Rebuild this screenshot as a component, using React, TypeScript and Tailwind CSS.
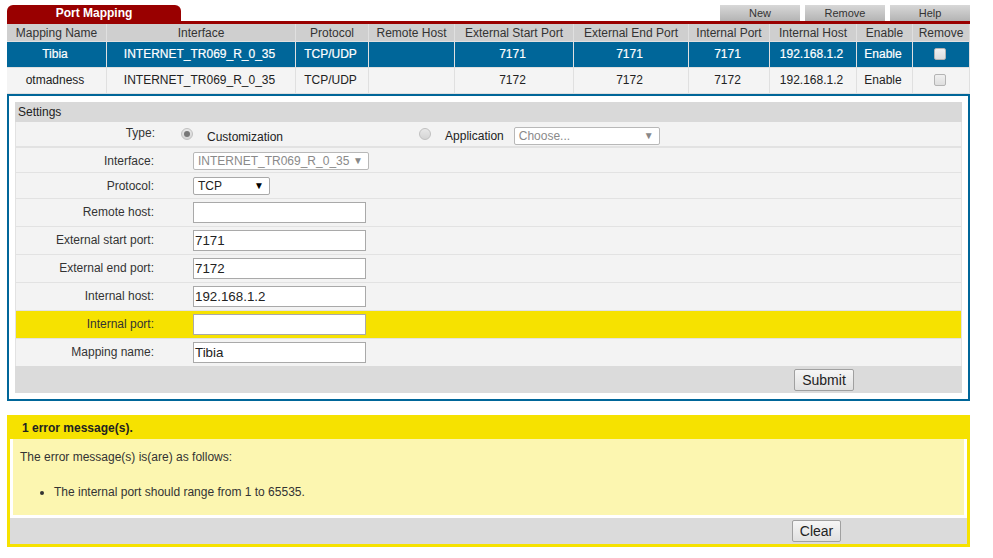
import React from 'react';

const cols = 'grid grid-cols-[99px_188px_72px_85px_118px_114px_80px_86px_55px_56px] gap-px';

const headers = ['Mapping Name', 'Interface', 'Protocol', 'Remote Host', 'External Start Port', 'External End Port', 'Internal Port', 'Internal Host', 'Enable', 'Remove'];

const rows = [
  { name: 'Tibia', start: '7171', end: '7171', port: '7171', selected: true },
  { name: 'otmadness', start: '7172', end: '7172', port: '7172', selected: false },
];

function Check() {
  return <span className="block w-[12px] h-[12px] rounded-[2px] border border-[#b4b4b4] bg-gradient-to-b from-[#f0f0f0] to-[#dedede]" />;
}

function Radio({ on }: { on?: boolean }) {
  return (
    <span className="flex items-center justify-center w-[12px] h-[12px] rounded-full border border-[#c0c0c0] bg-gradient-to-b from-[#e8e8e8] to-[#d4d4d4]">
      {on && <span className="block w-[6px] h-[6px] rounded-full bg-[#777]" />}
    </span>
  );
}

function Select({ value, width, disabled }: { value: string; width: string; disabled?: boolean }) {
  return (
    <div className={`relative flex items-center h-[18px] bg-white border rounded-[2px] pl-[4px] ${width} ${disabled ? 'border-[#b8b8b8] text-[#8a8a8a]' : 'border-[#a9a9a9] text-[#222]'}`}>
      {value}
      <span className={`absolute right-[5px] top-[3px] text-[10px] leading-[10px] ${disabled ? 'text-[#888]' : 'text-black'}`}>▼</span>
    </div>
  );
}

function Field({ label, value, yellow }: { label: string; value: string; yellow?: boolean }) {
  return (
    <div className={`flex items-center border-b border-[#e2e2e2] h-[28px] last:h-[27px] last:border-b-0 ${yellow ? 'bg-[#f6e200]' : ''}`}>
      <div className="w-[138px] text-right text-[#333] -mt-[2px]">{label}</div>
      <div className="ml-[39px] flex items-center w-[173px] h-[21px] bg-white border border-[#a9a9a9] px-[1px] text-[13.33px] text-[#222]">{value}</div>
    </div>
  );
}

export default function App() {
  return (
    <div className="w-[993px] h-[558px] bg-white pt-[5px] pl-[7px] text-[12px] font-['Liberation_Sans',Arial,sans-serif] overflow-hidden">
      <div className="w-[963px]">
        {/* top tab + action buttons */}
        <div className="flex justify-between h-[16px]">
          <div className="w-[174px] bg-[#990000] rounded-t-[6px] text-white font-bold text-center leading-[17px]">Port Mapping</div>
          <div className="flex gap-[5px]">
            {['New', 'Remove', 'Help'].map((b) => (
              <div key={b} className="w-[80px] h-[16px] bg-gradient-to-b from-[#d8d8d8] to-[#b4b4b4] text-center text-[11px] leading-[17px] text-[#333]">{b}</div>
            ))}
          </div>
        </div>
        <div className="h-[3px] bg-[#990000]" />

        {/* mapping table */}
        <div className={`${cols} bg-[#e0e0e0] pb-px`}>
          {headers.map((h) => (
            <div key={h} className="h-[17px] bg-[#cfcfcf] text-center text-[#333] leading-[19px] whitespace-nowrap">{h}</div>
          ))}
          {rows.map((r) => {
            const cell = `h-[25px] flex items-center justify-center whitespace-nowrap pr-[3px] pb-[2px] ${r.selected ? 'bg-[#006699] text-white [-webkit-text-stroke:0.2px_white]' : 'bg-[#f4f4f4] text-[#222]'}`;
            return (
              <React.Fragment key={r.name}>
                <div className={cell}>{r.name}</div>
                <div className={cell}>INTERNET_TR069_R_0_35</div>
                <div className={cell}>TCP/UDP</div>
                <div className={cell} />
                <div className={cell}>{r.start}</div>
                <div className={cell}>{r.end}</div>
                <div className={cell}>{r.port}</div>
                <div className={cell}>192.168.1.2</div>
                <div className={cell}>Enable</div>
                <div className={cell}><Check /></div>
              </React.Fragment>
            );
          })}
        </div>

        {/* settings panel */}
        <div className="border-2 border-[#006699] h-[307px] px-[6px] pt-[6px]">
          <div className="h-[20px] bg-[#d9d9d9] pl-[3px] leading-[20px] text-[#222]">Settings</div>
          <div className="bg-[#f3f3f3] border-x border-[#e2e2e2]">
            <div className="flex items-center h-[26px] border-b-2 border-[#e2e2e2]">
              <div className="w-[139px] text-right text-[#333] -mt-[3px]">Type:</div>
              <div className="ml-[26px]"><Radio on /></div>
              <div className="ml-[14px] text-[#222] mt-[5px]">Customization</div>
              <div className="ml-[136px] -mt-[1px]"><Radio /></div>
              <div className="ml-[14px] text-[#222] mt-[4px]">Application</div>
              <div className="ml-[10px] mt-[4px]"><Select value="Choose..." width="w-[146px]" disabled /></div>
            </div>
            <div className="flex items-center h-[25px] border-b border-[#e2e2e2]">
              <div className="w-[138px] text-right text-[#333] mt-[1px]">Interface:</div>
              <div className="ml-[39px] mt-[2px]"><Select value="INTERNET_TR069_R_0_35" width="w-[176px]" disabled /></div>
            </div>
            <div className="flex items-center h-[26px] border-b border-[#e2e2e2]">
              <div className="w-[138px] text-right text-[#333]">Protocol:</div>
              <div className="ml-[39px] mt-[1px]"><Select value="TCP" width="w-[77px]" /></div>
            </div>
            <Field label="Remote host:" value="" />
            <Field label="External start port:" value="7171" />
            <Field label="External end port:" value="7172" />
            <Field label="Internal host:" value="192.168.1.2" />
            <Field label="Internal port:" value="" yellow />
            <Field label="Mapping name:" value="Tibia" />
          </div>
          <div className="h-[27px] bg-[#dbdbdb] flex items-center pl-[779px]">
            <button className="w-[60px] h-[22px] rounded-[2px] border border-[#a0a0a0] bg-gradient-to-b from-[#f6f6f6] to-[#e0e0e0] text-[14px] text-[#222]">Submit</button>
          </div>
        </div>

        {/* error box */}
        <div className="mt-[14px] border-[3px] border-[#f6e200] h-[132px]">
          <div className="h-[21px] bg-[#f6e200] pl-[12px] font-bold text-[#222] leading-[20px]">1 error message(s).</div>
          <div className="bg-white px-[3px] pb-[3px]">
            <div className="h-[76px] bg-[#fcf6b0] pl-[7px] pt-[9px] text-[#333]">
              <p>The error message(s) is(are) as follows:</p>
              <ul className="list-disc ml-[34px] mt-[17px]">
                <li>The internal port should range from 1 to 65535.</li>
              </ul>
            </div>
          </div>
          <div className="h-[26px] bg-[#dbdbdb] flex items-center pl-[782px]">
            <button className="w-[49px] h-[22px] rounded-[2px] border border-[#a0a0a0] bg-gradient-to-b from-[#f6f6f6] to-[#e0e0e0] text-[14px] text-[#222]">Clear</button>
          </div>
        </div>
      </div>
    </div>
  );
}
